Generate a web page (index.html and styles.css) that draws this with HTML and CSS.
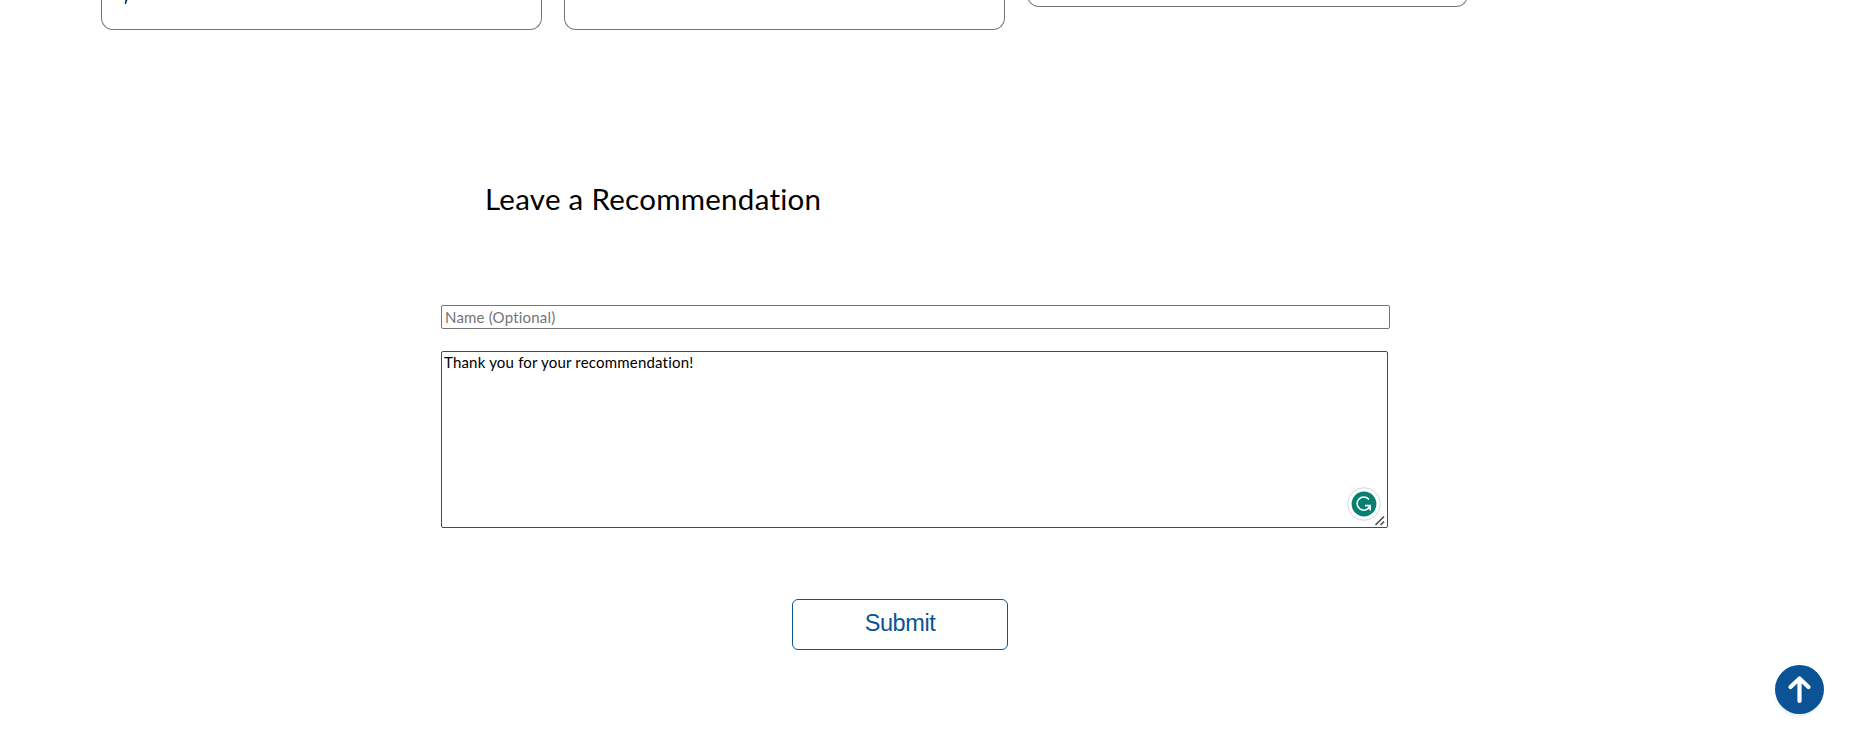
FILE: index.html
```html
<!DOCTYPE html>
<html lang="en">
<head>
<meta charset="utf-8">
<title>Recommendations</title>
<link rel="stylesheet" href="styles.css">
</head>
<body>
<section class="cards">
  <div class="card"><span class="card-tail">,</span></div>
  <div class="card"></div>
  <div class="card card-short"></div>
</section>
<form class="form">
  <h2 class="title"><span class="title-text">Leave a Recommendation</span></h2>
  <input class="name" type="text" placeholder="Name (Optional)">
  <div class="message-wrap">
    <textarea class="message" spellcheck="false">Thank you for your recommendation!</textarea>
    <svg class="checker" viewBox="0 0 34 34">
      <circle cx="17" cy="17" r="16.3" fill="#fff" stroke="#d2d5e2"/>
      <circle cx="17" cy="17" r="12.4" fill="#08806f"/>
      <path d="M22 12.6A6.6 6.6 0 1 0 22.6 19.6M18 18.6H23.2V23.4" fill="none" stroke="#fff" stroke-width="1.6"/>
    </svg>
    <svg class="grip" viewBox="0 0 12 12"><path d="M1.5 10 10 1.5M6.5 10 10 6.5" fill="none" stroke="#505050" stroke-width="1.7"/></svg>
  </div>
  <button class="submit" type="button">Submit</button>
</form>
<a class="to-top" href="#" aria-label="Back to top">
  <svg viewBox="0 0 49 49"><path d="M24.5 36V14M15.5 22 24.5 13.5 33.5 22" fill="none" stroke="#fff" stroke-width="4.2" stroke-linecap="round" stroke-linejoin="round"/></svg>
</a>
</body>
</html>
```
FILE: styles.css
```css
* { box-sizing: border-box; }
body {
  margin: 0;
  height: 730px;
  overflow: hidden;
  background: #fff;
  color: #000;
  font-family: "Trebuchet MS", Lato, "Noto Sans", sans-serif;
}
.cards {
  display: flex;
  align-items: flex-start;
  gap: 22px;
  height: 30px;
  padding-left: 101px;
}
.card {
  width: 441px;
  height: 30px;
  padding-left: 22px;
  border: 1px solid #767676;
  border-top: 0;
  border-radius: 0 0 12px 12px;
}
.card-short {
  height: 27px;
  margin-top: -20px;
}
.card-tail {
  display: block;
  margin-top: -14px;
  font: 16px/20px "Noto Sans", sans-serif;
}
.form {
  display: flex;
  flex-direction: column;
  width: 949px;
  margin-left: 441px;
  padding-top: 150px;
}
.title {
  height: 40px;
  margin: 0 0 85px 44px;
  font-size: 29.5px;
  letter-spacing: 0.28px;
  line-height: 37px;
  font-weight: 400;
}
.title-text { white-space: nowrap; }
.name, .message {
  margin: 0;
  border: 1px solid #767676;
  border-radius: 2px;
  background: #fff;
  font-family: inherit;
  font-size: 15px;
  letter-spacing: 0.19px;
  outline: 0;
}
.name {
  width: 949px;
  height: 24px;
  padding: 1px 3px;
}
.name::placeholder { color: #757575; }
.message-wrap {
  position: relative;
  width: 948px;
  height: 177px;
  margin-top: 22px;
}
.message {
  display: block;
  width: 947px;
  height: 177px;
  padding: 1px 2px;
  border-color: #4a4a4a;
  line-height: 19px;
  resize: none;
}
.checker {
  position: absolute;
  right: 8px;
  bottom: 7px;
  width: 34px;
  height: 34px;
}
.grip {
  position: absolute;
  right: 3px;
  bottom: 1px;
  width: 12px;
  height: 12px;
}
.submit {
  width: 216px;
  height: 51px;
  margin: 71px 0 0 351px;
  padding: 0 0 3px;
  border: 1px solid #0b5394;
  border-radius: 6px;
  background: #fff;
  color: #0b5394;
  font: 23.5px "Liberation Sans", Arial, sans-serif;
  letter-spacing: -0.4px;
}
.to-top {
  position: fixed;
  left: 1775px;
  top: 665px;
  width: 49px;
  height: 49px;
  border-radius: 50%;
  background: #0b5394;
  box-shadow: -1px 4px 2px -1px #f0f4f8;
}
.to-top svg { display: block; }
```
